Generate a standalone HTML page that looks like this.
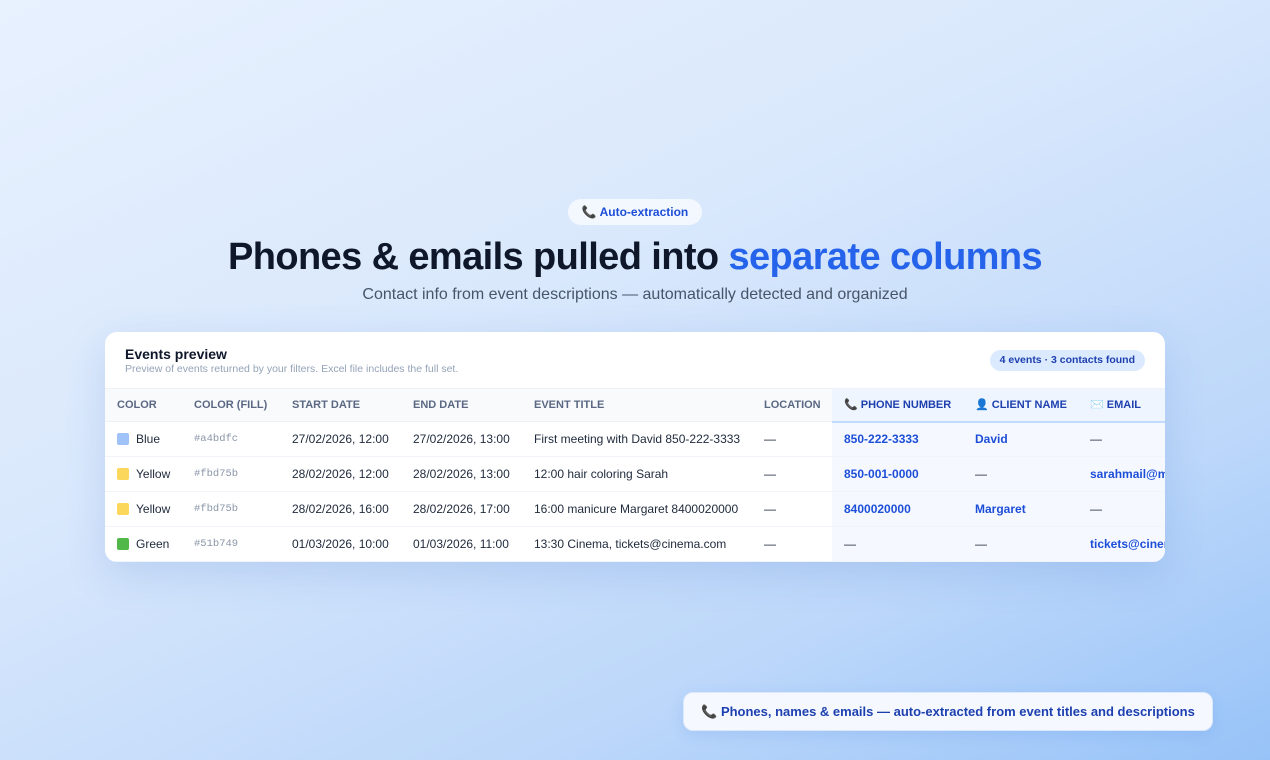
<!DOCTYPE html>
<html><head><meta charset="utf-8"><style>
*{margin:0;padding:0;box-sizing:border-box}
body{width:1270px;height:760px;overflow:hidden;font-family:"Liberation Sans",sans-serif;background:linear-gradient(155deg,#e8f1fe 0%,#d9e8fc 40%,#bcd7fa 75%,#97c3f8 100%);position:relative}
.pill{position:absolute;left:568px;top:199px;width:134px;height:26px;border-radius:13px;background:#f3f8ff;color:#1d4ed8;font-size:12px;font-weight:bold;text-align:center;line-height:26px}
h1{position:absolute;top:236px;left:0;width:1270px;text-align:center;font-size:38px;font-weight:bold;color:#0f172a;letter-spacing:-0.6px}
h1 span{color:#2563eb}
.sub{position:absolute;top:286px;left:0;width:1270px;text-align:center;font-size:16px;color:#475569}
.card{position:absolute;left:105px;top:332px;width:1060px;height:230px;background:#fff;border-radius:12px;overflow:hidden;box-shadow:0 12px 40px rgba(59,110,200,.18)}
.ct{position:absolute;left:20px;top:14px;font-size:14px;font-weight:bold;color:#0f172a}
.cs{position:absolute;left:20px;top:31px;font-size:10.5px;color:#94a3b8}
.badge{position:absolute;right:20px;top:18px;height:21px;padding:0 10px;border-radius:11px;background:#dbeafe;color:#1e40af;font-size:10.5px;font-weight:bold;line-height:21px}
table{position:absolute;top:56px;left:0;border-collapse:collapse;table-layout:fixed;width:1120px}
th,td{white-space:nowrap;overflow:hidden;text-align:left;padding:0 0 0 12px}
th{height:33px;background:#f8fafc;font-size:11px;color:#5b6883;font-weight:bold;border-bottom:1px solid #eef2f7;border-top:1px solid #eef2f7}
td{height:35px;font-size:12px;color:#1e293b;border-bottom:1px solid #f1f5f9}
th.h{background:#eef5ff;color:#1e40af;border-bottom:2px solid #bfdbfe}
td.h{background:#f5f9ff;color:#1d4ed8;font-weight:bold}
.sw{display:inline-block;width:12px;height:12px;border-radius:2px;vertical-align:-2px;margin-right:7px}
.mono{font-family:"Liberation Mono",monospace;font-size:10.5px;color:#8a96a8}
.foot{position:absolute;left:683px;top:692px;width:530px;height:39px;border-radius:10px;background:#f5f9ff;border:1px solid #dbe7fb;color:#1e40af;font-size:13px;font-weight:bold;text-align:center;line-height:38px;box-shadow:0 4px 14px rgba(60,120,220,.15)}
</style></head><body>
<div class="pill">📞 Auto-extraction</div>
<h1>Phones &amp; emails pulled into <span>separate columns</span></h1>
<div class="sub">Contact info from event descriptions — automatically detected and organized</div>
<div class="card">
<div class="ct">Events preview</div>
<div class="cs">Preview of events returned by your filters. Excel file includes the full set.</div>
<div class="badge">4 events · 3 contacts found</div>
<table>
<colgroup><col style="width:77px"><col style="width:98px"><col style="width:121px"><col style="width:121px"><col style="width:230px"><col style="width:80px"><col style="width:131px"><col style="width:115px"><col style="width:147px"></colgroup>
<tr><th>COLOR</th><th>COLOR (FILL)</th><th>START DATE</th><th>END DATE</th><th>EVENT TITLE</th><th>LOCATION</th><th class="h">📞 PHONE NUMBER</th><th class="h">👤 CLIENT NAME</th><th class="h">✉️ EMAIL</th></tr>
<tr><td><span class="sw" style="background:#9fc2f9"></span>Blue</td><td class="mono">#a4bdfc</td><td>27/02/2026, 12:00</td><td>27/02/2026, 13:00</td><td>First meeting with David 850-222-3333</td><td>—</td><td class="h">850-222-3333</td><td class="h">David</td><td class="h" style="color:#1e293b;font-weight:normal">—</td></tr>
<tr><td><span class="sw" style="background:#fbd75b"></span>Yellow</td><td class="mono">#fbd75b</td><td>28/02/2026, 12:00</td><td>28/02/2026, 13:00</td><td>12:00 hair coloring Sarah</td><td>—</td><td class="h">850-001-0000</td><td class="h" style="color:#1e293b;font-weight:normal">—</td><td class="h">sarahmail@mail.com</td></tr>
<tr><td><span class="sw" style="background:#fbd75b"></span>Yellow</td><td class="mono">#fbd75b</td><td>28/02/2026, 16:00</td><td>28/02/2026, 17:00</td><td>16:00 manicure Margaret 8400020000</td><td>—</td><td class="h">8400020000</td><td class="h">Margaret</td><td class="h" style="color:#1e293b;font-weight:normal">—</td></tr>
<tr><td><span class="sw" style="background:#51b749"></span>Green</td><td class="mono">#51b749</td><td>01/03/2026, 10:00</td><td>01/03/2026, 11:00</td><td>13:30 Cinema, tickets@cinema.com</td><td>—</td><td class="h" style="color:#1e293b;font-weight:normal">—</td><td class="h" style="color:#1e293b;font-weight:normal">—</td><td class="h">tickets@cinema.com</td></tr>
</table>
</div>
<div class="foot">📞 Phones, names &amp; emails — auto-extracted from event titles and descriptions</div>
</body></html>
